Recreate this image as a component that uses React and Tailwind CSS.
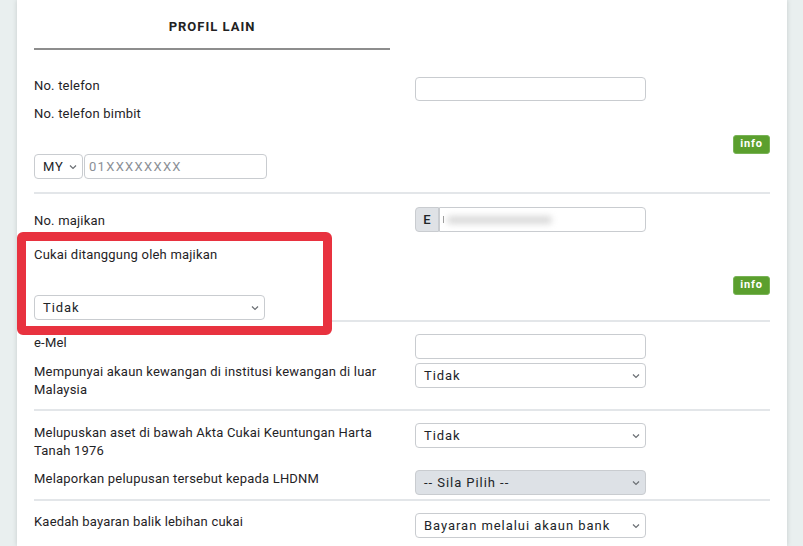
const labelCls = "text-[13px] leading-[18px] tracking-[0.2px] text-[#1f2326]";

const Chevron = () => (
  <svg width="8" height="5" viewBox="0 0 8 5" className="absolute right-[5px] top-1/2 -translate-y-1/2">
    <path d="M1 1l3 3 3-3" fill="none" stroke="#6b6f74" strokeWidth="1.2" />
  </svg>
);

const Select = ({ value, w = "w-[231px]", gray }) => (
  <div
    className={`relative ${w} h-[25px] border border-[#c9ccd0] rounded-[4px] flex items-center pl-[8px] ${gray ? "bg-[#dde1e6]" : "bg-white"}`}
  >
    <span className="text-[13px] tracking-[0.95px] text-[#212529]">{value}</span>
    <Chevron />
  </div>
);

const Input = ({ h = "h-[25px]" }) => (
  <div className={`w-[231px] ${h} border border-[#c9ccd0] rounded-[4px] bg-white`} />
);

const InfoBtn = () => (
  <div className="flex justify-end">
    <div className="w-[37px] h-[19px] rounded-[3px] bg-[#5b9f2e] border border-[#78b356] flex items-center justify-center text-white text-[11px] font-bold tracking-[0.8px]">
      info
    </div>
  </div>
);

const Hr = ({ className = "" }) => <div className={`h-[2px] bg-[#e3e6e9] ${className}`} />;

export default function App() {
  return (
    <div className="w-[803px] h-[546px] bg-[#e9efef] pl-[17px] overflow-hidden" style={{ fontFamily: "Roboto, 'Liberation Sans', sans-serif" }}>
      <div className="w-[770px] h-[546px] bg-white shadow-[0_0_5px_rgba(0,0,0,0.15)] pl-[17px]">
        <div className="w-[736px]">
          {/* Header */}
          <div className="w-[356px] h-[50px] border-b-2 border-[#8d8d8d] pt-[14px] text-center">
            <span className="text-[13px] leading-[18px] font-bold tracking-[1px] text-[#222]">PROFIL LAIN</span>
          </div>

          {/* Telefon */}
          <div className="pt-[27px]">
            <div className="flex items-start">
              <div className={`w-[381px] ${labelCls}`}>No. telefon</div>
              <Input h="h-[24px]" />
            </div>
            <div className={`mt-[4px] ${labelCls}`}>No. telefon bimbit</div>
            <div className="mt-[12px]">
              <InfoBtn />
            </div>
            <div className="flex gap-[1px]">
              <Select value="MY" w="w-[49px]" />
              <div className="w-[183px] h-[25px] border border-[#c9ccd0] rounded-[4px] flex items-center pl-[4px] text-[13px] tracking-[1.3px] text-[#8b9096]">
                01XXXXXXXX
              </div>
            </div>
            <Hr className="mt-[13px]" />
          </div>

          {/* Majikan */}
          <div className="relative pt-[13px]">
            <div className="absolute top-[38px] left-[-17px] w-[315px] h-[103px] border-[9px] border-[#e8323f] rounded-[6px] bg-white z-[1]" />
            <div className="flex items-start">
              <div className={`w-[381px] pt-[5px] ${labelCls}`}>No. majikan</div>
              <div className="flex">
                <div className="w-[24px] h-[25px] bg-[#dfe2e6] border border-[#c9ccd0] rounded-l-[4px] flex items-center justify-center text-[13px] font-medium text-[#212529]">
                  E
                </div>
                <div className="w-[207px] h-[25px] border border-[#c9ccd0] rounded-r-[4px] flex items-center pl-[3px]">
                  <div className="w-[1px] h-[7px] bg-[#9a9a9a] mr-[3px]" />
                  <div className="w-[105px] h-[8px] bg-[#d9d9d9] rounded-full blur-[3px]" />
                </div>
              </div>
            </div>
            <div className={`relative z-[2] mt-[14px] ${labelCls}`}>Cukai ditanggung oleh majikan</div>
            <div className="mt-[12px]">
              <InfoBtn />
            </div>
            <div className="relative z-[2]">
              <Select value="Tidak" />
            </div>
            <Hr />
          </div>

          {/* e-Mel */}
          <div className="pt-[12px]">
            <div className="flex items-start">
              <div className={`relative z-[2] w-[381px] ${labelCls}`}>e-Mel</div>
              <Input />
            </div>
            <div className="mt-[4px] flex items-start">
              <div className={`w-[381px] pr-[6px] ${labelCls}`}>
                Mempunyai akaun kewangan di institusi kewangan di luar Malaysia
              </div>
              <Select value="Tidak" />
            </div>
            <Hr className="mt-[10px]" />
          </div>

          {/* Aset */}
          <div className="pt-[12px]">
            <div className="flex items-start">
              <div className={`w-[381px] pt-[1px] pr-[10px] ${labelCls}`}>
                Melupuskan aset di bawah Akta Cukai Keuntungan Harta Tanah 1976
              </div>
              <Select value="Tidak" />
            </div>
            <div className="mt-[10px] flex items-start">
              <div className={`w-[381px] ${labelCls}`}>Melaporkan pelupusan tersebut kepada LHDNM</div>
              <Select value="-- Sila Pilih --" gray />
            </div>
            <Hr className="mt-[4px]" />
          </div>

          {/* Bayaran balik */}
          <div className="pt-[12px] flex items-start">
            <div className={`w-[381px] ${labelCls}`}>Kaedah bayaran balik lebihan cukai</div>
            <Select value="Bayaran melalui akaun bank" />
          </div>
        </div>
      </div>
    </div>
  );
}
